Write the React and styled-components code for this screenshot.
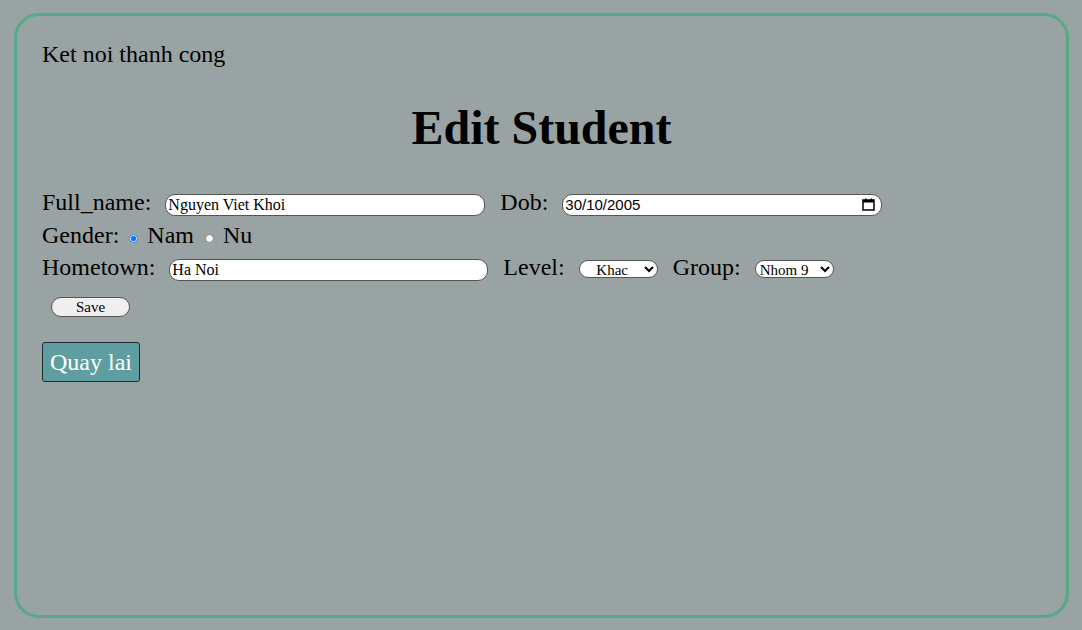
import styled, { createGlobalStyle } from "styled-components"

const GlobalStyle = createGlobalStyle`
  html, body {
    margin: 0;
    background: #9aa3a3;
    font-family: "Liberation Serif", "Times New Roman", serif;
  }
  body {
    padding: 13px 13px 12px 14px;
  }
`

const Frame = styled.div`
  box-sizing: border-box;
  height: 605px;
  border: 3px solid #56aa88;
  border-radius: 25px;
  padding: 24px 25px;
`

const Notice = styled.p`
  margin: 0;
  font-size: 24px;
  line-height: 28px;
`

const Title = styled.h1`
  margin: 32px 0 32px 0;
  font-size: 48px;
  line-height: 56px;
  text-align: center;
`

const Form = styled.form`
  display: flex;
  flex-direction: column;
  align-items: flex-start;
`

const Row = styled.div`
  display: flex;
  align-items: baseline;
  height: ${({ h }) => h || 32}px;
`

const Label = styled.label`
  font-size: 24px;
  line-height: 28px;
  margin-right: ${({ gap }) => gap ?? 14}px;
  margin-left: ${({ lead }) => lead ?? 0}px;
`

const TextInput = styled.input`
  box-sizing: border-box;
  width: ${({ w }) => w || 320}px;
  height: 22px;
  border: 1px solid #555;
  border-radius: 10px;
  background: #fff;
  font-family: "Liberation Serif", serif;
  font-size: 16px;
  padding: 0 2px;
  outline: none;
`

const DateField = styled.div`
  box-sizing: border-box;
  display: flex;
  align-items: center;
  width: 320px;
  height: 22px;
  border: 1px solid #555;
  border-radius: 10px;
  background: #fff;
  padding: 0 6px 0 2px;
  input {
    flex: 1;
    min-width: 0;
    border: none;
    outline: none;
    background: transparent;
    padding: 0;
    font-family: "Liberation Sans", Arial, sans-serif;
    font-size: 15px;
  }
  svg {
    flex: none;
  }
`

const Radio = styled.input`
  margin: 0 9px 0 ${({ lead }) => lead ?? 10}px;
  width: 9px;
  height: 9px;
  accent-color: #1a73e8;
`

const Select = styled.select`
  box-sizing: border-box;
  width: 79px;
  height: 18px;
  border: 1px solid #555;
  border-radius: 9px;
  background: #fff;
  font-family: "Liberation Serif", serif;
  font-size: 15px;
  text-align: ${({ centered }) => (centered ? "center" : "left")};
  padding: 0;
`

const SaveButton = styled.button`
  box-sizing: border-box;
  width: 79px;
  height: 20px;
  margin: 11px 0 0 9px;
  border: 1px solid #555;
  border-radius: 10px;
  background: #efefef;
  font-family: "Liberation Serif", serif;
  font-size: 15px;
  line-height: 16px;
  padding: 0;
`

const BackButton = styled.a`
  display: inline-block;
  box-sizing: border-box;
  margin-top: 25px;
  height: 40px;
  padding: 0 7px;
  background: #5f9ea0;
  border: 1px solid #1e2b2b;
  border-radius: 3px;
  color: #fff;
  font-size: 24px;
  line-height: 38px;
  text-decoration: none;
`

function CalendarIcon() {
  return (
    <svg width="13" height="13" viewBox="0 0 13 13">
      <rect x="1" y="2" width="11" height="10" fill="none" stroke="#000" strokeWidth="1.5" />
      <rect x="1" y="2" width="11" height="2.5" fill="#000" />
      <rect x="3" y="0.5" width="1.5" height="2" fill="#000" />
      <rect x="8.5" y="0.5" width="1.5" height="2" fill="#000" />
    </svg>
  )
}

export default function App() {
  return (
    <>
      <GlobalStyle />
      <Frame>
        <Notice>Ket noi thanh cong</Notice>
        <Title>Edit Student</Title>
        <Form onSubmit={e => e.preventDefault()}>
          <Row h={33}>
            <Label>Full_name:</Label>
            <TextInput defaultValue="Nguyen Viet Khoi" />
            <Label lead={15}>Dob:</Label>
            <DateField>
              <input defaultValue="30/10/2005" />
              <CalendarIcon />
            </DateField>
          </Row>
          <Row h={32}>
            <Label gap={0}>Gender:</Label>
            <Radio type="radio" name="gender" defaultChecked />
            <Label gap={0}>Nam</Label>
            <Radio type="radio" name="gender" lead={11} />
            <Label gap={0}>Nu</Label>
          </Row>
          <Row h={33}>
            <Label>Hometown:</Label>
            <TextInput w={319} defaultValue="Ha Noi" />
            <Label lead={15}>Level:</Label>
            <Select centered defaultValue="Khac">
              <option>Dai hoc</option>
              <option>Cao dang</option>
              <option>Khac</option>
            </Select>
            <Label lead={15}>Group:</Label>
            <Select defaultValue="Nhom 9">
              <option>Nhom 8</option>
              <option>Nhom 9</option>
            </Select>
          </Row>
          <SaveButton type="submit">Save</SaveButton>
        </Form>
        <BackButton href="#">Quay lai</BackButton>
      </Frame>
    </>
  )
}
